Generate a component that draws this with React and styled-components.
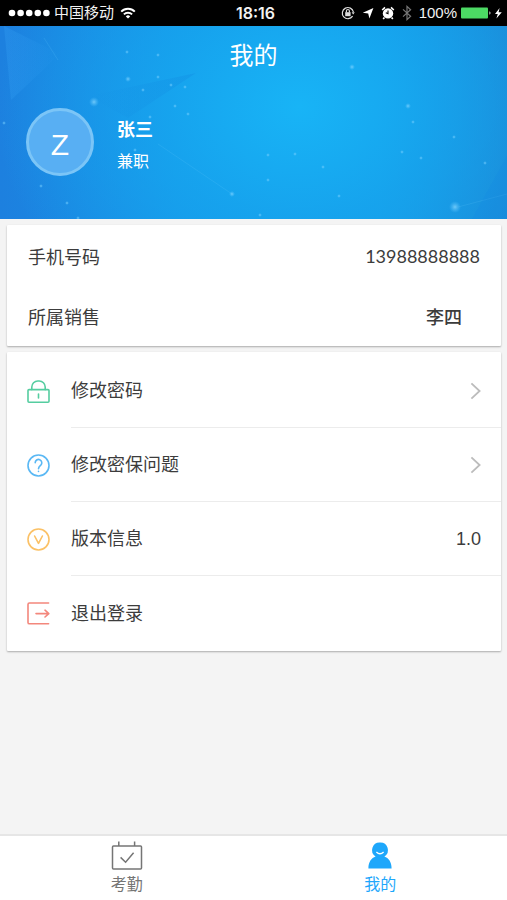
import React from 'react'
import { styled, createGlobalStyle } from 'styled-components'

const colors = {
  primary: '#1ea7fb',
  text: '#3c3c3c',
  muted: '#757575',
  line: '#ececec',
  page: '#f4f4f4',
}

const GlobalStyle = createGlobalStyle`
  * {
    box-sizing: border-box;
  }

  body {
    margin: 0;
    background: ${colors.page};
    color: ${colors.text};
    font-family: "Liberation Sans", "Noto Sans CJK SC", sans-serif;
  }

  h1, h2, p, ul, dl, dd {
    margin: 0;
    padding: 0;
  }
`;

const Page = styled.div`
  display: flex;
  flex-direction: column;
  min-height: 100vh;
`;

/* status bar */

const StatusBar = styled.div`
  display: grid;
  grid-template-columns: 1fr auto 1fr;
  align-items: center;
  height: 26px;
  padding: 0 4px 0 8px;

  background: #000;
  color: #f2f2f2;
  font-size: 15px;
  line-height: 26px;
`;

const Carrier = styled.div`
  display: flex;
  align-items: center;
  gap: 4px;

  svg:last-child {
    margin-left: 2px;
  }
`;

const Clock = styled.time`
  font-size: 16px;
  font-weight: 600;
  font-family: Inter, sans-serif;
`;

const Indicators = styled.div`
  display: flex;
  justify-content: flex-end;
  align-items: center;
  gap: 7px;
`;

const Battery = styled.span`
  display: flex;
  align-items: center;
  gap: 4px;
`;

/* profile header */

const Hero = styled.header`
  position: relative;
  overflow: hidden;
  padding-bottom: 42px;

  background:
    radial-gradient(ellipse 60% 130% at 59% 42%, #18b4f6 0%, rgba(22, 168, 240, 0.75) 45%, rgba(22, 150, 230, 0) 100%),
    linear-gradient(90deg, #1d80df 0%, #1792e6 35%, #1796e4 75%, #1c84d2 100%);
  color: #fff;
`;

const Backdrop = styled.svg`
  position: absolute;
  inset: 0;
  width: 100%;
  height: 100%;
`;

const Title = styled.h1`
  position: relative;

  font-size: 24px;
  font-weight: 400;
  line-height: 60px;
  text-align: center;
`;

const Profile = styled.div`
  position: relative;
  display: flex;
  align-items: flex-start;
  gap: 23px;
  padding: 22px 26px 0;
`;

const Avatar = styled.div`
  display: flex;
  justify-content: center;
  align-items: center;
  width: 68px;
  height: 68px;
  padding-top: 6px;

  background: #58aff3;
  border: 3px solid #7bc5f7;
  border-radius: 50%;
  font-size: 30px;
`;

const ProfileText = styled.div`
  padding-top: 5px;
`;

const Name = styled.h2`
  font-size: 18px;
  font-weight: 700;
  line-height: 34px;
`;

const Role = styled.p`
  font-size: 16px;
  line-height: 30px;
`;

/* cards */

const Main = styled.main`
  display: flex;
  flex: 1;
  flex-direction: column;
  gap: 6px;
  padding: 6px 6px 20px 7px;
`;

const Card = styled.section`
  background: #fff;
  border-radius: 1px;
  box-shadow: 0 1px 2px rgba(0, 0, 0, 0.3);
  font-size: 18px;
`;

const InfoList = styled.dl`
  padding: 1px 21px 0;
`;

const InfoRow = styled.div`
  display: flex;
  justify-content: space-between;
  align-items: center;
  height: 60px;
`;

const InfoValue = styled.dd`
  padding-right: ${props => props.$inset ? "18px" : "0"};

  font-family: Lato, "Noto Sans CJK SC", sans-serif;
  font-weight: ${props => props.$inset ? 500 : 400};
`;

const Menu = styled.ul`
  padding-top: 2px;

  list-style: none;
`;

const MenuItem = styled.li`
  display: flex;
  align-items: center;
  padding-left: 19px;
`;

const MenuIcon = styled.svg`
  flex: none;
  width: 25px;
  height: 25px;

  fill: none;
  stroke: ${props => props.color};
  stroke-width: 1.6;
  stroke-linecap: round;
  stroke-linejoin: round;
`;

const MenuButton = styled.button`
  display: flex;
  flex: 1;
  justify-content: space-between;
  align-items: center;
  height: ${props => props.$last ? "75px" : "74px"};
  margin-left: 20px;
  padding: 0 20px 0 0;

  background: none;
  border: 0;
  border-bottom: ${props => props.$last ? "0" : `1px solid ${colors.line}`};
  color: inherit;
  font: inherit;
  line-height: 26px;
  text-align: left;
  cursor: pointer;
`;

/* tab bar */

const TabBar = styled.nav`
  display: flex;
  height: 66px;

  background: #fff;
  border-top: 2px solid #e6e6e6;
`;

const Tab = styled.a`
  display: flex;
  flex: 1;
  flex-direction: column;
  align-items: center;
  padding-top: 5px;

  color: ${props => props.$active ? colors.primary : colors.muted};
  font-size: 16px;
  line-height: 24px;
  text-decoration: none;
`;

const particles = [
  [94, 76, 4], [127, 26, 1], [158, 29, 1], [128, 53, 2], [158, 51, 1], [143, 64, 1],
  [171, 59, 1], [185, 61, 1], [175, 80, 1], [188, 88, 1], [150, 91, 1], [135, 124, 1],
  [41, 160, 1], [67, 177, 1], [78, 192, 1], [232, 168, 2], [4, 97, 1], [352, 41, 2],
  [408, 80, 2], [413, 96, 1], [454, 111, 1], [402, 126, 1], [421, 132, 1], [485, 137, 1],
  [268, 129, 1], [295, 128, 1], [268, 154, 1], [323, 141, 1], [339, 170, 1], [455, 181, 5],
  [260, 189, 1],
]

function HeroBackdrop() {
  return (
    <Backdrop viewBox="0 0 507 193" preserveAspectRatio="none" aria-hidden="true">
      <defs>
        <radialGradient id="spark">
          <stop offset="0" stopColor="#8bd8ff" stopOpacity="0.75" />
          <stop offset="1" stopColor="#5cc4ff" stopOpacity="0" />
        </radialGradient>
        <linearGradient id="wedge" x1="0" x2="1">
          <stop offset="0" stopColor="#0f7fdc" stopOpacity="0" />
          <stop offset="1" stopColor="#0f7fdc" stopOpacity="0.25" />
        </linearGradient>
        <linearGradient id="shard" x1="0" x2="1">
          <stop offset="0" stopColor="#35a2f5" stopOpacity="0.3" />
          <stop offset="1" stopColor="#35a2f5" stopOpacity="0" />
        </linearGradient>
      </defs>
      <path d="M4 0L60 28L11 74Z" fill="url(#shard)" />
      <path d="M88 70L196 47L128 92Z" fill="url(#wedge)" />
      <path d="M158 118L232 168M44 12L58 34M458 181L507 168" stroke="#63c6fa" strokeOpacity="0.18" fill="none" />
      <path d="M507 130L472 193H507Z" fill="#1488e4" fillOpacity="0.25" />
      {particles.map(([x, y, r]) => (
        <circle key={`${x}-${y}`} cx={x} cy={y} r={r + 1} fill="url(#spark)" />
      ))}
    </Backdrop>
  )
}

function SignalDots() {
  return (
    <svg width="42" height="8" viewBox="0 0 42 8" fill="#fff" aria-hidden="true">
      {[4, 12.6, 21.2, 29.8, 38.4].map(x => <circle key={x} cx={x} cy="4" r="3.3" />)}
    </svg>
  )
}

function WifiIcon() {
  return (
    <svg width="16" height="12" viewBox="0 0 16 12" fill="none" stroke="#fff" strokeWidth="2" aria-hidden="true">
      <path d="M1.2 4.6a9.6 9.6 0 0 1 13.6 0M3.9 7.4a5.8 5.8 0 0 1 8.2 0" />
      <path d="M8 11.6L5.8 9.4a3.2 3.2 0 0 1 4.4 0Z" fill="#fff" stroke="none" />
    </svg>
  )
}

function StatusIcons() {
  return (
    <>
      <svg width="14" height="14" viewBox="0 0 14 14" fill="none" stroke="#ddd" strokeWidth="1.2" aria-hidden="true">
        <path d="M11.6 10.2A5.6 5.6 0 1 1 12.4 6" />
        <path d="M10.6 6.2h3.2L12.2 8.6Z" fill="#ddd" stroke="none" />
        <path d="M5.4 6.4V5a1.5 1.5 0 0 1 3 0v1.4" />
        <rect x="4.2" y="6.2" width="5.4" height="4" fill="#ddd" stroke="none" />
      </svg>
      <svg width="12" height="12" viewBox="0 0 12 12" fill="#fff" aria-hidden="true">
        <path d="M11.4 1L7.4 11.6L6.2 6.4L0.8 5.8Z" />
      </svg>
      <svg width="14" height="14" viewBox="0 0 14 14" aria-hidden="true">
        <circle cx="7" cy="7.4" r="5.2" fill="#fff" />
        <path d="M1.2 4L4 1.4M12.8 4L10 1.4M3.4 11.4L2.2 13M10.6 11.4L11.8 13" stroke="#fff" strokeWidth="1.6" />
        <path d="M7 4.4v3.2L4.8 6.8" stroke="#000" strokeWidth="1.1" fill="none" />
      </svg>
      <svg width="10" height="16" viewBox="0 0 10 16" fill="none" stroke="#777" strokeWidth="1.2" aria-hidden="true">
        <path d="M1 4.4L8.6 11.2L5 14.6V1.4L8.6 4.8L1 11.6" />
      </svg>
    </>
  )
}

function BatteryIcon() {
  return (
    <svg width="42" height="14" viewBox="0 0 42 14" aria-hidden="true">
      <rect x="0" y="1.5" width="27" height="11" rx="1" fill="#4cd964" />
      <path d="M28.4 5.2a2 2 0 0 1 0 3.6Z" fill="#ddd" />
      <path d="M38.6 2L34 8h2.8L35.4 12.6L40.8 6.2H37.6Z" fill="#fff" />
    </svg>
  )
}

const menu = [
  {
    label: '修改密码',
    color: '#55cda0',
    icon: (
      <>
        <rect x="2" y="10.6" width="21" height="12.6" rx="1" />
        <path d="M5.8 10.6V8A6 6 0 0 1 11.8 2h1.4A6 6 0 0 1 19.2 8v2.6M12.5 15v4" />
      </>
    ),
  },
  {
    label: '修改密保问题',
    color: '#5ab8f4',
    icon: (
      <>
        <circle cx="12.5" cy="12.5" r="10.5" />
        <path d="M9.2 9.8a3.3 3.3 0 1 1 5.6 2.3c-1.4 1.2-2.3 1.8-2.3 3.6M12.5 18.4v.1" />
      </>
    ),
  },
  {
    label: '版本信息',
    value: '1.0',
    color: '#fbc166',
    icon: (
      <>
        <circle cx="12.5" cy="12.5" r="10.5" />
        <path d="M8.6 9L12.5 16.4L16.4 9" />
      </>
    ),
  },
  {
    label: '退出登录',
    color: '#f3877c',
    icon: (
      <path d="M22.6 2H3.4Q2 2 2 3.4V21.4Q2 22.8 3.4 22.8H22.6M10 12.6H22.6M19 9.2L22.8 12.6L19 16" />
    ),
  },
]

function Chevron() {
  return (
    <svg width="11" height="18" viewBox="0 0 11 18" fill="none" stroke="#bcbcbc" strokeWidth="1.8" aria-hidden="true">
      <path d="M1.4 1.4L9.6 9L1.4 16.6" />
    </svg>
  )
}

export default function App() {
  return (
    <Page>
      <GlobalStyle />
      <StatusBar>
        <Carrier>
          <SignalDots />
          <span>中国移动</span>
          <WifiIcon />
        </Carrier>
        <Clock>18:16</Clock>
        <Indicators>
          <StatusIcons />
          <Battery>
            <span>100%</span>
            <BatteryIcon />
          </Battery>
        </Indicators>
      </StatusBar>

      <Hero>
        <HeroBackdrop />
        <Title>我的</Title>
        <Profile>
          <Avatar>Z</Avatar>
          <ProfileText>
            <Name>张三</Name>
            <Role>兼职</Role>
          </ProfileText>
        </Profile>
      </Hero>

      <Main>
        <Card>
          <InfoList>
            <InfoRow>
              <dt>手机号码</dt>
              <InfoValue>13988888888</InfoValue>
            </InfoRow>
            <InfoRow>
              <dt>所属销售</dt>
              <InfoValue $inset>李四</InfoValue>
            </InfoRow>
          </InfoList>
        </Card>

        <Card>
          <Menu>
            {menu.map(({ label, value, color, icon }, i) => (
              <MenuItem key={label}>
                <MenuIcon viewBox="0 0 25 25" color={color} aria-hidden="true">{icon}</MenuIcon>
                <MenuButton type="button" $last={i === menu.length - 1}>
                  <span>{label}</span>
                  {value && <span>{value}</span>}
                  {i < 2 && <Chevron />}
                </MenuButton>
              </MenuItem>
            ))}
          </Menu>
        </Card>
      </Main>

      <TabBar>
        <Tab href="#attendance">
          <svg width="32" height="32" viewBox="0 0 32 32" fill="none" stroke="currentColor" strokeWidth="1.5" aria-hidden="true">
            <rect x="1.5" y="5" width="29" height="23" rx="1" />
            <path d="M7.8 0.5v4.5M23.6 0.5v4.5M9.6 16.4L14.6 21.2L22.6 11.8" />
          </svg>
          <span>考勤</span>
        </Tab>
        <Tab href="#mine" $active aria-current="page">
          <svg width="32" height="32" viewBox="0 0 32 32" fill="currentColor" aria-hidden="true">
            <path d="M16 1.4A7.6 7.6 0 0 1 20.4 15.4C24.6 17 27.6 20.6 27.6 27.4H4.4C4.4 20.6 7.4 17 11.6 15.4A7.6 7.6 0 0 1 16 1.4Z" />
            <path d="M12.4 11Q16 14.6 19.6 11" fill="none" stroke="#fff" strokeWidth="1.3" />
          </svg>
          <span>我的</span>
        </Tab>
      </TabBar>
    </Page>
  )
}
